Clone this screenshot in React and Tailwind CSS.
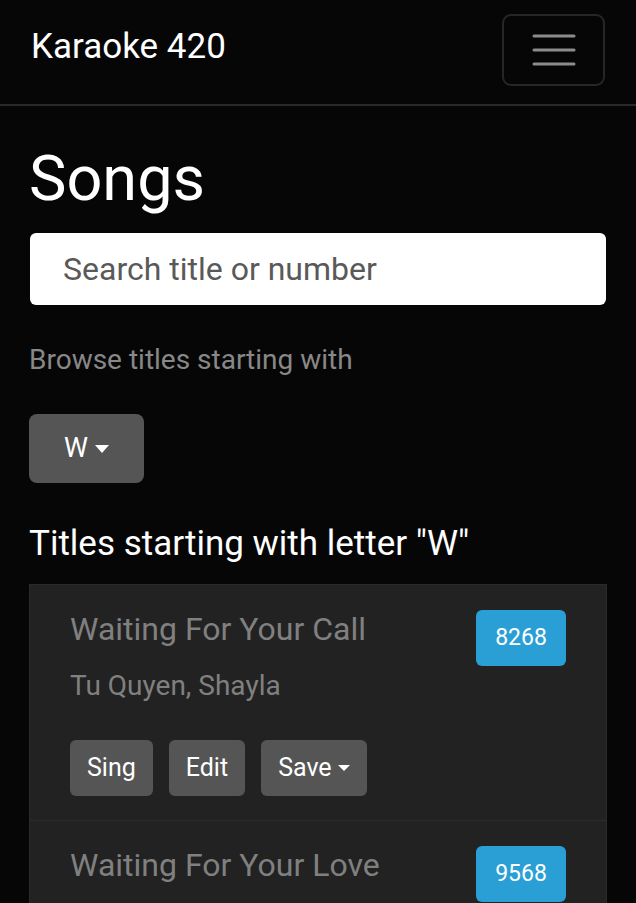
import React from "react";

const songs = [
  { title: "Waiting For Your Call", artist: "Tu Quyen, Shayla", number: "8268" },
  { title: "Waiting For Your Love", artist: "Toto", number: "9568" },
];

const Caret = ({ className }) => (
  <span
    className={
      "inline-block w-0 h-0 border-l-transparent border-r-transparent border-t-white " + className
    }
  />
);

export default function App() {
  return (
    <div className="min-h-screen bg-[#060606] font-['Roboto',sans-serif] text-white">
      <nav className="h-[106px] border-b-2 border-[#2a2a2a] flex items-start justify-between pl-[31px] pr-[31px]">
        <span className="mt-[26px] text-[35px] leading-[42px] text-white">Karaoke 420</span>
        <button
          type="button"
          className="mt-[14px] w-[103px] h-[72px] border-2 border-[#262626] rounded-[9px] flex items-center justify-center"
          aria-label="Toggle navigation">
          <svg width="44" height="32" viewBox="0 0 44 32" fill="none">
            <path d="M2 2H42M2 16H42M2 30H42" stroke="#8c8c8c" strokeWidth="3" strokeLinecap="round" />
          </svg>
        </button>
      </nav>

      <main className="px-[29px]">
        <h1 className="mt-[35px] text-[63px] leading-[76px] font-normal text-white">Songs</h1>

        <input
          type="text"
          placeholder="Search title or number"
          className="mt-[16px] ml-px block w-[576px] h-[72px] rounded-[6px] bg-white px-[33px] text-[32px] text-[#222] placeholder:text-[#595959] outline-none"
        />

        <p className="mt-[34px] text-[28px] leading-[42px] text-[#888]">Browse titles starting with</p>

        <button
          type="button"
          className="mt-[33px] h-[69px] w-[115px] rounded-[8px] bg-[#555] flex items-center justify-center text-[27px] text-white">
          W
          <Caret className="ml-[7px] border-l-[7px] border-r-[7px] border-t-[8px]" />
        </button>

        <h4 className="mt-[40px] text-[35px] leading-[42px] font-normal text-white">Titles starting with letter "W"</h4>

        <div className="mt-[19px] bg-[#222] border border-[#2a2a2a]">
          {songs.map((song, i) => (
            <div
              key={song.number}
              className={
                "pl-[40px] pr-[40px] pt-[25px] pb-[24px] flex justify-between items-start " +
                (i > 0 ? "border-t border-[#2c2c2c]" : "")
              }>
              <div className="flex flex-col">
                <div className="text-[32px] leading-[38px] text-[#808080]">{song.title}</div>
                <div className="mt-[17px] text-[28px] leading-[42px] text-[#808080]">{song.artist}</div>
                <div className="mt-[33px] flex gap-[16px]">
                  <button type="button" className="h-[56px] px-[17px] rounded-[6px] bg-[#555] text-[25px] text-white">
                    Sing
                  </button>
                  <button type="button" className="h-[56px] px-[17px] rounded-[6px] bg-[#555] text-[25px] text-white">
                    Edit
                  </button>
                  <button
                    type="button"
                    className="h-[56px] px-[17px] rounded-[6px] bg-[#555] text-[25px] text-white flex items-center">
                    Save
                    <Caret className="ml-[6px] border-l-[6px] border-r-[6px] border-t-[6px]" />
                  </button>
                </div>
              </div>
              <span className="w-[90px] h-[56px] rounded-[6px] bg-[#2a9fd6] flex items-center justify-center text-[23px] text-white">
                {song.number}
              </span>
            </div>
          ))}
        </div>
      </main>
    </div>
  );
}
